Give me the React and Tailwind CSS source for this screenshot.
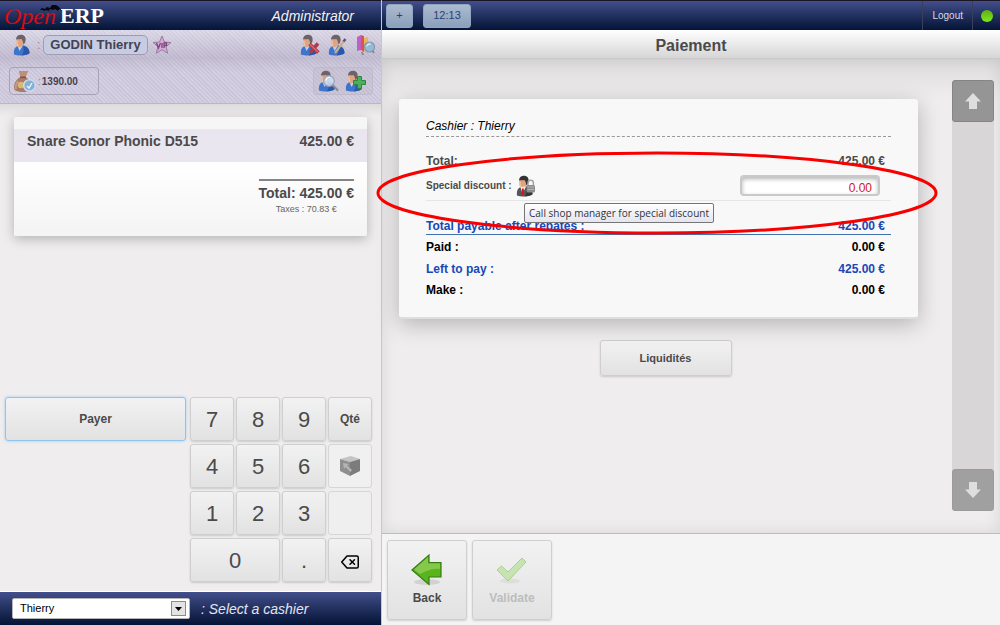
import React from "react";
import { FiDelete } from "react-icons/fi";

const KEY =
  "rounded-[3px] border border-[#cfcfcf] bg-linear-to-b from-[#f2f2f2] to-[#e2e2e2] text-[#4a4a4a] shadow-[0_1px_2px_rgba(0,0,0,0.15)]";

function Person({ suit = "#3f74cc", shade = "#2b57ab", hair = "#6d6268", children }) {
  return (
    <svg viewBox="0 0 22 22" className="size-[22px]" aria-hidden="true">
      <path d="M2 20.500c-.5-4 .3-7.500 4-8.500l5-.7c4 .8 6.500 3.200 6.500 8-3 2.500-11 2.700-15.500 1.200z" fill={suit} />
      <path d="M11 12c4 .8 6.500 3 6.500 7.300-2 1.500-5 2-8 2.100 2.500-2 2.500-6 1.500-9.400z" fill={shade} />
      <path d="M5.500 12l2 5 3.500-5.500z" fill="#bcd2f2" />
      <path d="M4.500 5c-.6 3-.6 6 1.500 8 2.500.8 5-1 6-4V5L8 3z" fill="#dfa583" />
      <path d="M5 6.500c-.4 2 0 4 1 5.500" stroke="#f0c8aa" strokeWidth="1.300" fill="none" />
      <path d="M4 5.500C4 2.500 6 .8 9 .8s5 2.200 4.600 5.500c-.2 2-1 3.500-2.100 4.200C11 8.500 11 7 9.500 5 7.500 5.500 5.500 5 4 5.500z" fill={hair} />
      {children}
    </svg>
  );
}

function Magnifier() {
  return (
    <>
      <path d="M16 15.500l4.500 4.500" stroke="#8a8894" strokeWidth="2" strokeLinecap="round" />
      <circle cx="12" cy="11" r="5.300" fill="#cbdcf0" fillOpacity=".9" stroke="#9aa1b4" strokeWidth="1.200" />
      <path d="M9 10.500a3.500 3.500 0 0 1 4-3" stroke="#fff" fill="none" />
    </>
  );
}

function MoneyBag() {
  return (
    <svg viewBox="0 0 24 24" className="size-6 shrink-0" aria-hidden="true">
      <path d="M6 2l9 0-2.500 6c5 3 6.500 7 6.500 10 0 4-3 5-8.500 5S1 22 1 18.500C1 14 3.500 10 7.500 8z" fill="#a97a68" />
      <path d="M6 2l9 0-2.500 5.500-5 .3z" fill="#bf9078" />
      <path d="M7 8.300h6" stroke="#8c4f4a" strokeWidth="1.500" />
      <path d="M5 12c-2 2.500-2.500 5-2 8" stroke="#c9a28a" strokeWidth="1.500" fill="none" />
      <circle cx="8" cy="16" r="3.300" fill="#d8b878" />
      <circle cx="16.500" cy="16.500" r="5.800" fill="#84b0d6" stroke="#cdd9e8" strokeWidth="1.600" />
      <path d="M14 17l2 2 3-5" stroke="#e9f4fc" strokeWidth="1.400" fill="none" />
    </svg>
  );
}

function Star() {
  return (
    <svg viewBox="0 0 20 20" className="size-5" aria-hidden="true">
      <path d="M10 1l2.500 6 6.500.5-5 4.200 1.700 6.500-5.700-3.500-5.700 3.500L6 11.700 1 7.500 7.500 7z" fill="#d9a8d6" stroke="#957f9c" />
      <path d="M4.500 8l2 5 2-5M10 8v5M12 13V8h2.500v2.500H12" fill="none" stroke="#7d447f" strokeWidth="1.300" />
    </svg>
  );
}

function Books() {
  return (
    <svg viewBox="0 0 22 22" className="size-[22px]" aria-hidden="true">
      <path d="M2 3l4-2v15l-4 1z" fill="#bd62c4" />
      <path d="M6 1l3 1v16l-3-2z" fill="#d9545a" />
      <path d="M9 4l4-1 1 14-5 1z" fill="#e9b45a" />
      <path d="M17 16l2 3M7 18l1 3" stroke="#8a8894" strokeWidth="2" />
      <circle cx="14.500" cy="13" r="5" fill="#93bcdc" stroke="#8697aa" strokeWidth="1.200" />
      <path d="M11.500 12.500a3.500 3.500 0 0 1 4-2.500" stroke="#fff" fill="none" />
    </svg>
  );
}

function Manager() {
  return (
    <Person suit="#55555a" shade="#333338" hair="#333">
      <path d="M5.500 12l2 7 3.500-7.500z" fill="#eee" />
      <path d="M7 13.500l1.700 0 .6 5.500-1.500 1.500-1.300-1.500z" fill="#d01818" />
      <path d="M13 11V8a2.700 2.700 0 0 1 5.400 0v3" fill="none" stroke="#a4a4a4" strokeWidth="1.500" />
      <rect x="11.500" y="10" width="8.500" height="7.500" rx="1.500" fill="#8c8c8c" />
      <path d="M12.500 12h6.500M12.500 14.500h6.500" stroke="#b5b5b5" />
    </Person>
  );
}

function BoxIcon() {
  return (
    <svg viewBox="0 0 22 22" className="size-[22px]" aria-hidden="true">
      <path d="M1 4l11-3 9 3-10 3z" fill="#c4c4c4" />
      <path d="M1 4l10 3v14L1 16z" fill="#8f8f8f" />
      <path d="M21 4L11 7v14l10-5z" fill="#7c7c7c" />
      <path d="M4 8l6 1-2 1.500 5 4.500-1.500 2-5-5L5 14z" fill="#b5b5b5" />
    </svg>
  );
}

function ScrollArrow({ down }) {
  return (
    <svg viewBox="0 0 16 16" className="size-4" aria-hidden="true">
      <path
        d={down ? "M4 0h8v7.500h4L8 16 0 7.500h4z" : "M8 0l8 8.500h-4V16H4V8.500H0z"}
        fill="#dedede"
      />
    </svg>
  );
}

function Logo() {
  return (
    <div className="relative flex items-center pl-1 font-['Liberation_Serif',serif] text-[22px] leading-7">
      <span className="text-[24px] text-[#d80c10] italic">Open</span>
      <span className="ml-1 font-bold text-white">ERP</span>
      <svg viewBox="0 0 22 7" className="absolute top-[3px] left-10 h-[7px] w-[22px]" aria-hidden="true">
        <path d="M0 5l2-2 3 1 2-2 3 1 2-3 4 0 3 2 3 4-3-2-1 2-3-2-2 1-3-1-1 2-3-1-2 1-1-1z" fill="#07070c" />
      </svg>
    </div>
  );
}

function Key({ label, className = "text-[22px]" }) {
  return <button className={`${KEY} ${className}`}>{label}</button>;
}

function Row({ label, amount, className }) {
  return (
    <div className={`flex items-center justify-between pr-[6px] text-xs font-bold ${className}`}>
      <span>{label}</span>
      <span>{amount}</span>
    </div>
  );
}

function LeftPane() {
  return (
    <div className="flex w-[382px] shrink-0 flex-col border-r border-[#c9c8c9] bg-[#efedee]">
      <header className="flex h-[30px] items-center justify-between border-t border-[#1c1526] bg-linear-to-b from-[#434f8c] to-[#051436] pr-[27px]">
        <Logo />
        <span className="text-sm text-[#f2f2f6] italic">Administrator</span>
      </header>

      <div className="border-b border-[#bdb6ca] bg-[repeating-linear-gradient(45deg,#cac4da_0px,#cac4da_1px,#d6d1e2_2px,#d6d1e2_3px)] text-[#454251]">
        <div className="flex h-[29px] items-center justify-between bg-linear-to-b from-white/25 to-[#8e86a0]/25 pr-1 pl-3">
          <div className="flex items-center">
            <Person />
            <span className="mx-[3px] text-xs text-[#8d879c]">:</span>
            <button className="h-5 rounded-[5px] border border-[#a09cb4] bg-[#c7cce3] px-[6px] text-[13px] leading-4 font-bold">
              GODIN Thierry
            </button>
            <span className="ml-1">
              <Star />
            </span>
          </div>
          <div className="flex gap-[6px]">
            <button aria-label="Remove customer">
              <Person>
                <path d="M10.500 10l9 8.500M19 9.500l-8 9" stroke="#b03a4c" strokeWidth="3.600" />
                <path d="M11 10.500l8 7.500" stroke="#d96a78" strokeWidth="1.200" />
              </Person>
            </button>
            <button aria-label="Edit customer">
              <Person>
                <path d="M8 19l9-12" stroke="#cbac88" strokeWidth="2.200" />
                <path d="M16.500 7.500l2-2.500" stroke="#5b5674" strokeWidth="2.500" />
              </Person>
            </button>
            <button aria-label="Customer history">
              <Books />
            </button>
          </div>
        </div>
        <div className="flex h-[44px] items-center justify-between bg-linear-to-b from-[#8e86a0]/20 to-transparent to-30% pr-2 pl-[9px]">
          <div className="flex h-7 w-[90px] items-center rounded-[4px] border border-[#a8a2b6] pl-[3px] text-[10px] font-bold">
            <MoneyBag />
            <span className="mx-[1px] font-normal text-[#8d879c]">:</span>
            <span>1390.00</span>
          </div>
          <div className="flex h-7 items-center gap-[5px] rounded-[4px] border border-[#c0bacd] bg-[#b5aec5]/30 pr-[6px] pl-[3px]">
            <button aria-label="Search customer">
              <Person>
                <Magnifier />
              </Person>
            </button>
            <button aria-label="Add customer">
              <Person>
                <path d="M13.500 6.500h4v4h4v4h-4v4h-4v-4h-4v-4h4z" fill="#4fae5a" stroke="#2f8543" />
              </Person>
            </button>
          </div>
        </div>
      </div>

      <div className="flex-1 bg-linear-to-b from-[#dddbdc] to-[#efedee] to-[12px] px-[14px] pt-[13px]">
        <div className="h-[119px] rounded-[2px] bg-[#f6f6f6] pt-3 text-sm font-bold text-[#4a4a4a] shadow-[0_3px_12px_rgba(0,0,0,0.25)]">
          <div className="flex h-[33px] justify-between bg-[#e9e6f0] px-[13px] leading-6">
            <span>Snare Sonor Phonic D515</span>
            <span>425.00 €</span>
          </div>
          <div className="flex h-[74px] justify-end rounded-b-[2px] bg-linear-to-b from-white to-[#f4f4f4] px-[13px] pt-[17px]">
            <div className="text-center">
              <p className="border-t-2 border-[#858585] pt-[2px] leading-5">Total: 425.00 €</p>
              <p className="text-[9px] leading-3 font-normal text-[#666]">Taxes : 70.83 €</p>
            </div>
          </div>
        </div>
      </div>

      <div className="flex items-start gap-1 px-[5px] pb-[9px]">
        <button className="h-11 flex-1 rounded-[3px] border border-[#93c3ea] bg-linear-to-b from-[#f2f2f2] to-[#e2e2e2] text-xs font-bold text-[#4a4a4a] shadow-[0_0_3px_#9fcdf0]">
          Payer
        </button>
        <div className="mr-1 grid grid-cols-[repeat(4,44px)] auto-rows-[44px] gap-x-[2px] gap-y-[3px]">
          <Key label="7" />
          <Key label="8" />
          <Key label="9" />
          <Key label="Qté" className="text-xs font-bold" />
          <Key label="4" />
          <Key label="5" />
          <Key label="6" />
          <button aria-label="Product" className="flex items-center justify-center rounded-[3px] border border-[#d6d6d6] bg-[#f0f0f0]">
            <BoxIcon />
          </button>
          <Key label="1" />
          <Key label="2" />
          <Key label="3" />
          <button aria-label="Unused key" className="rounded-[3px] border border-[#d6d6d6] bg-[#f0eff0]" />
          <Key label="0" className="col-span-2 text-[22px]" />
          <Key label="." />
          <button aria-label="Delete" className={`${KEY} flex items-center justify-center pt-1`}>
            <FiDelete className="size-[18px] text-black" />
          </button>
        </div>
      </div>

      <footer className="flex h-[34px] items-center border-t border-white bg-linear-to-b from-[#434f8c] to-[#051436] pl-3">
        <div className="relative flex items-center">
          <select
            id="cashier"
            className="h-[21px] w-[178px] appearance-none rounded-[2px] border border-[#b5b5b5] bg-white pl-[7px] text-[11px] text-black"
          >
            <option>Thierry</option>
          </select>
          <span className="pointer-events-none absolute right-[4px] flex h-[15px] w-[15px] items-center justify-center border border-[#8c8c8c] bg-[#e3e3e3]">
            <svg viewBox="0 0 7 4" className="h-1 w-[7px]" aria-hidden="true">
              <path d="M0 0h7L3.500 4z" fill="#000" />
            </svg>
          </span>
        </div>
        <label htmlFor="cashier" className="ml-[11px] text-sm text-[#e3e5ef] italic">
          : Select a cashier
        </label>
      </footer>
    </div>
  );
}

function PaymentCard() {
  return (
    <div className="relative rounded-[3px] border-b-2 border-[#dedede] bg-[#f8f8f8] px-[27px] pt-[17px] pb-[17px] shadow-[0_5px_22px_rgba(0,0,0,0.25)]">
      <p className="border-b border-dashed border-[#999] text-xs leading-5 text-black italic">Cashier : Thierry</p>

      <div className="pt-[14px]">
        <Row label="Total:" amount="425.00 €" className="leading-5 text-[#4a4a4a]" />
        <div className="flex h-[30px] items-center justify-between border-b border-[#e6e6e6] pr-[11px]">
          <div className="flex items-center text-[10px] font-bold text-[#4a4a4a]">
            <label htmlFor="discount">Special discount :</label>
            <button aria-label="Call shop manager" className="ml-[3px]">
              <Manager />
            </button>
          </div>
          <input
            id="discount"
            defaultValue="0.00"
            className="h-[21px] w-[140px] rounded-[4px] border-2 border-[#c9c9c9] bg-white px-[6px] pt-[4px] text-right text-xs text-[#d4141c] shadow-[inset_0_2px_4px_rgba(0,0,0,0.3)]"
          />
        </div>
        <Row label="Total payable after rebates :" amount="425.00 €" className="mt-[17px] border-b border-[#3f72ae] leading-4 text-[#1648b8]" />
        <Row label="Paid :" amount="0.00 €" className="mt-[2px] leading-5 text-black" />
        <Row label="Left to pay :" amount="425.00 €" className="mt-[2px] leading-5 text-[#1648b8]" />
        <Row label="Make :" amount="0.00 €" className="mt-[1px] leading-5 text-black" />
      </div>

      <div
        role="tooltip"
        className="absolute top-[104px] left-[125px] rounded-[2px] border border-[#767676] bg-linear-to-b from-white to-[#e4e5f0] px-1 font-['Open_Sans',sans-serif] text-[10px] leading-[18px] whitespace-nowrap text-[#333]"
      >
        Call shop manager for special discount
      </div>

      {/* highlight ring */}
      <svg
        viewBox="0 0 562 84"
        preserveAspectRatio="none"
        className="pointer-events-none absolute top-[52px] -left-[23px] h-[84px] w-[calc(100%+43px)]"
        aria-hidden="true"
      >
        <ellipse cx="281" cy="42" rx="279" ry="40" fill="none" stroke="#f90000" strokeWidth="3" />
      </svg>
    </div>
  );
}

function RightPane() {
  return (
    <div className="relative flex min-w-0 flex-1 flex-col bg-[#efedee]">
      <header className="flex h-[30px] items-stretch border-t border-[#1c1526] bg-linear-to-b from-[#434f8c] to-[#051436] pl-1">
        <div className="flex flex-1 items-center gap-[10px] text-[11px] text-[#2c4170]">
          <button className="h-6 w-[27px] rounded-[3px] border border-[#8fa5c1] bg-linear-to-b from-[#abbbd0] to-[#8ba0ba]">+</button>
          <button className="h-6 w-12 rounded-[3px] border border-[#8fa5c1] bg-linear-to-b from-[#abbbd0] to-[#8ba0ba]">12:13</button>
        </div>
        <button className="border-l border-[#3a3f5e] px-[9px] text-[10px] text-[#d6d9e6]">Logout</button>
        <div className="flex w-7 items-center justify-center border-l border-[#3a3f5e]">
          <span className="size-3 rounded-full bg-linear-to-b from-[#5fae18] to-[#7ded12]" />
        </div>
      </header>

      <h1 className="h-[29px] border-b border-[#c9c9c9] bg-linear-to-b from-white to-[#d6d6d6] text-center text-base leading-8 font-bold text-[#4a4a4a]">
        Paiement
      </h1>

      <div className="flex flex-1 items-stretch bg-linear-to-b from-[#dddbdc] to-[#efedee] to-[40px] pr-[6px] pl-[17px] shadow-[inset_0_0_16px_rgba(0,0,0,0.1)]">
        <main className="flex-1 pt-10">
          <PaymentCard />
          <div className="mt-[21px] flex justify-center pl-[14px]">
            <button className={`${KEY} h-9 w-[132px] text-[11px] font-bold`}>Liquidités</button>
          </div>
        </main>
        <div className="mt-[21px] mb-[22px] ml-[34px] flex w-[42px] flex-col justify-between rounded-[3px] bg-[#d8d6d7]">
          <button aria-label="Scroll up" className="flex h-[42px] items-center justify-center rounded-[3px] border border-[#858585] bg-[#959595]">
            <ScrollArrow />
          </button>
          <button aria-label="Scroll down" className="flex h-[42px] items-center justify-center rounded-[3px] border border-[#9b9b9b] bg-[#a0a0a0]">
            <ScrollArrow down />
          </button>
        </div>
      </div>

      <div className="flex h-[92px] gap-[5px] border-t border-[#bdbdbd] bg-[#f4f4f4] px-[5px] pt-[6px] text-xs font-bold">
        <button className={`${KEY} flex size-20 flex-col items-center pt-3`}>
          <svg viewBox="0 0 34 34" className="size-[34px]" aria-hidden="true">
            <ellipse cx="17" cy="29" rx="13" ry="3" fill="#000" opacity=".1" />
            <path d="M2 17L19 2v7.500h12V24H19v7.500z" fill="#59b51b" stroke="#347d12" strokeWidth="1.200" />
            <path d="M4 16.500L18 4v6.500h12V16c-9-1-15 3-20 5z" fill="#a3d66c" opacity=".6" />
          </svg>
          <span className="mt-[3px]">Back</span>
        </button>
        <button disabled className={`${KEY} flex size-20 flex-col items-center pt-3`}>
          <svg viewBox="0 0 34 34" className="size-[34px]" aria-hidden="true">
            <ellipse cx="15" cy="28" rx="10" ry="2.500" fill="#000" opacity=".05" />
            <path d="M2 17l4.500-4L13 19 27 5l4 4-18 19z" fill="#c5e4af" stroke="#abd097" />
          </svg>
          <span className="mt-[3px] text-[#bdbdbd]">Validate</span>
        </button>
      </div>
    </div>
  );
}

export default function App() {
  return (
    <div className="flex min-h-screen font-['Liberation_Sans',Arial,sans-serif]">
      <LeftPane />
      <RightPane />
    </div>
  );
}
